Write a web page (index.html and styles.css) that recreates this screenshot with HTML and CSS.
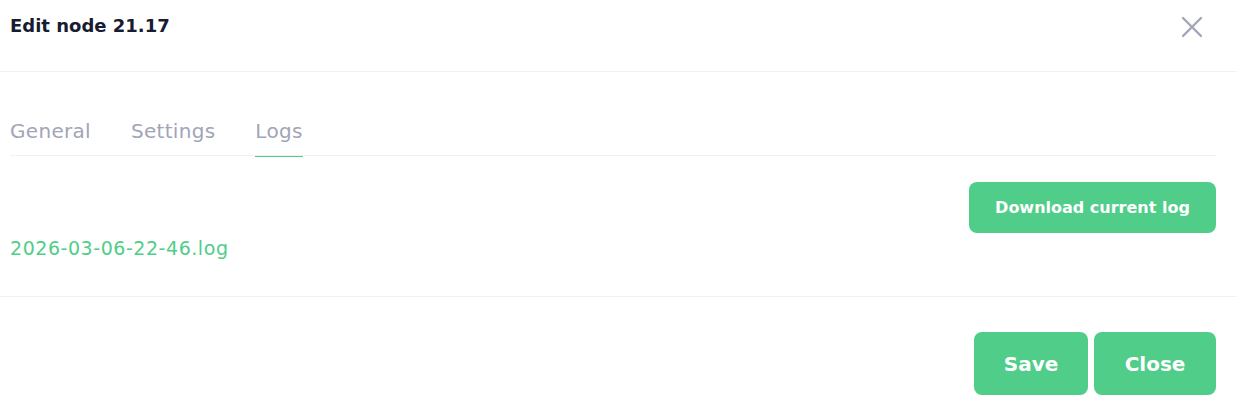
FILE: index.html
```html
<!DOCTYPE html>
<html lang="en">
<head>
<meta charset="utf-8">
<title>Edit node 21.17</title>
<link rel="stylesheet" href="styles.css">
</head>
<body>
<div class="modal">
  <div class="modal-header">
    <h2 class="modal-title">Edit node 21.17</h2>
    <button class="btn-close" aria-label="Close">
      <svg width="22" height="22" viewBox="0 0 22 22"><path d="M2 2 L20 20 M20 2 L2 20" stroke="#a1a5b7" stroke-width="2.4" stroke-linecap="round" fill="none"/></svg>
    </button>
  </div>
  <div class="modal-body">
    <ul class="tabs">
      <li class="tab">General</li>
      <li class="tab">Settings</li>
      <li class="tab active">Logs</li>
    </ul>
    <div class="logs">
      <div class="logs-actions">
        <button class="btn btn-download">Download current log</button>
      </div>
      <a class="log-link" href="#">2026-03-06-22-46.log</a>
    </div>
  </div>
  <div class="modal-footer">
    <button class="btn btn-lg">Save</button>
    <button class="btn btn-lg btn-close-lg">Close</button>
  </div>
</div>
</body>
</html>
```
FILE: styles.css
```css
* { box-sizing: border-box; }
html, body { margin: 0; padding: 0; background: #fff; }
body { font-family: "DejaVu Sans", Inter, sans-serif; color: #181c32; }

.modal { width: 1236px; }

.modal-header {
  height: 72px;
  display: flex;
  justify-content: space-between;
  align-items: flex-start;
  padding: 12px 33px 0 10px;
  border-bottom: 1px solid #eff2f5;
}
.modal-title {
  margin: 0;
  font-size: 18px;
  font-weight: 700;
  line-height: 28px;
  color: #181c32;
}
.btn-close {
  border: 0;
  background: transparent;
  padding: 0;
  margin-top: 4px;
  width: 22px;
  height: 22px;
  cursor: pointer;
}
.btn-close svg { display: block; }

.modal-body { padding: 44px 20px 0 10px; }

.tabs {
  list-style: none;
  margin: 0;
  padding: 0;
  display: flex;
  gap: 40px;
  border-bottom: 1px solid #eff2f5;
}
.tab {
  font-size: 20px;
  line-height: 30px;
  letter-spacing: 0.3px;
  color: #a1a5b7;
  padding-bottom: 10px;
  margin-bottom: -2px;
  border-bottom: 1px solid transparent;
}
.tab.active { border-bottom-color: #50cd89; }

.logs { padding-top: 26px; padding-bottom: 34px; }
.logs-actions { display: flex; justify-content: flex-end; }
.log-link {
  display: block;
  color: #50cd89;
  text-decoration: none;
  font-size: 19px;
  letter-spacing: 0.55px;
  line-height: 28px;
  margin-top: 1px;
}

.btn {
  border: 0;
  background: #50cd89;
  color: #fff;
  font-family: inherit;
  font-weight: 700;
  cursor: pointer;
}
.btn-download {
  width: 247px;
  height: 51px;
  border-radius: 8px;
  font-size: 16px;
}

.modal-footer {
  border-top: 1px solid #eff2f5;
  display: flex;
  justify-content: flex-end;
  gap: 6px;
  padding: 35px 20px 0 10px;
}
.btn-lg {
  width: 114px;
  height: 63px;
  border-radius: 8px;
  font-size: 20px;
}
.btn-close-lg { width: 122px; }
```
